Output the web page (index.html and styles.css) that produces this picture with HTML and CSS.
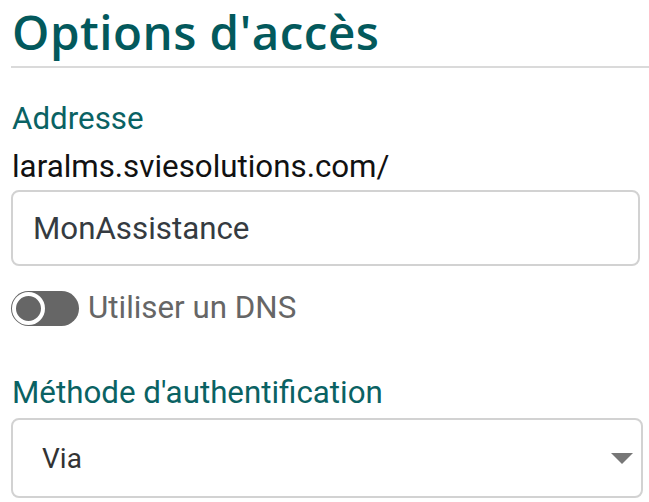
FILE: index.html
```html
<!DOCTYPE html>
<html lang="fr">
<head>
<meta charset="utf-8">
<title>Options d'accès</title>
<link rel="stylesheet" href="styles.css">
</head>
<body>
<main class="page">
  <h1 class="title">Options d'accès</h1>
  <section class="form">
    <div class="label label-address">Addresse</div>
    <div class="url">laralms.sviesolutions.com/</div>
    <div class="field">MonAssistance</div>
    <div class="toggle-row">
      <span class="toggle"><span class="knob"></span></span>
      <span class="toggle-label">Utiliser un DNS</span>
    </div>
    <div class="label label-method">Méthode d'authentification</div>
    <div class="select">
      <span class="select-value">Via</span>
      <svg class="caret" width="22" height="11" viewBox="0 0 22 11"><path d="M0 0 H22 L11 11 Z" fill="#777"/></svg>
    </div>
  </section>
</main>
</body>
</html>
```
FILE: styles.css
```css
html, body {
  margin: 0;
  padding: 0;
  background: #ffffff;
}
.page {
  padding: 0 0 0 11px;
  font-family: Roboto, "Liberation Sans", sans-serif;
}
.title {
  margin: 0;
  padding: 0 0 2px 1px;
  font-family: "Open Sans", "DejaVu Sans", sans-serif;
  font-weight: 600;
  font-size: 47.5px;
  line-height: 64px;
  letter-spacing: 0.5px;
  color: #03595c;
  border-bottom: 2px solid #dadada;
}
.form {
  display: flex;
  flex-direction: column;
}
.label {
  font-size: 31.3px;
  line-height: 36px;
  color: #0a6263;
  padding-left: 1px;
}
.label-address {
  margin-top: 33px;
}
.url {
  font-size: 31.3px;
  line-height: 36px;
  color: #111;
  margin-top: 12px;
  padding-left: 1px;
}
.field {
  margin-top: 5px;
  width: 629px;
  height: 76px;
  box-sizing: border-box;
  border: 2px solid #d2d2d2;
  border-radius: 8px;
  padding: 0 0 0 20px;
  display: flex;
  align-items: center;
  font-size: 31.3px;
  color: #353b41;
}
.toggle-row {
  margin-top: 24px;
  display: flex;
  align-items: center;
  gap: 9px;
}
.toggle {
  width: 68px;
  height: 35px;
  border-radius: 18px;
  background: #666666;
  display: flex;
  align-items: center;
  padding-left: 1px;
  box-sizing: border-box;
}
.knob {
  width: 33px;
  height: 33px;
  box-sizing: border-box;
  border-radius: 50%;
  border: 4px solid #ffffff;
  background: #666666;
}
.toggle-label {
  font-size: 31.3px;
  line-height: 36px;
  color: #666666;
}
.label-method {
  margin-top: 49px;
}
.select {
  margin-top: 7px;
  width: 632px;
  height: 80px;
  box-sizing: border-box;
  border: 2px solid #d2d2d2;
  border-radius: 8px;
  padding: 0 8px 0 29px;
  display: flex;
  align-items: center;
  justify-content: space-between;
  font-size: 28px;
  color: #333;
}
.caret {
  display: block;
}
```
